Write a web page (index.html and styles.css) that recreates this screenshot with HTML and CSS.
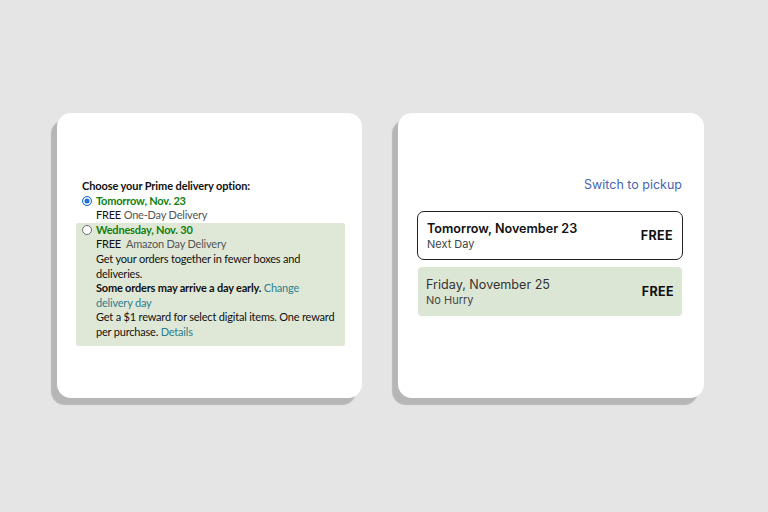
FILE: index.html
```html
<!DOCTYPE html>
<html>
<head>
<meta charset="utf-8">
<link rel="stylesheet" href="styles.css">
</head>
<body>
<main class="stage">
  <section class="card card-amazon">
    <div class="prime">
      <div class="prime-title">Choose your Prime delivery option:</div>
      <div class="opt">
        <span class="radio radio-on"></span>
        <div class="opt-body">
          <div class="date">Tomorrow, Nov. 23</div>
          <div class="line"><span class="free">FREE</span> <span class="muted">One-Day Delivery</span></div>
        </div>
      </div>
      <div class="opt opt-hl">
        <span class="radio"></span>
        <div class="opt-body">
          <div class="date">Wednesday, Nov. 30</div>
          <div class="line"><span class="free">FREE</span>&nbsp; <span class="muted">Amazon Day Delivery</span></div>
          <div class="line">Get your orders together in fewer boxes and<br>deliveries.</div>
          <div class="line"><b>Some orders may arrive a day early.</b> <span class="link">Change</span><br><span class="link">delivery day</span></div>
          <div class="line">Get a $1 reward for select digital items. One reward<br>per purchase. <span class="link">Details</span></div>
        </div>
      </div>
    </div>
  </section>
  <section class="card card-walmart">
    <div class="wm">
      <div class="switch">Switch to pickup</div>
      <div class="slot slot-sel">
        <div class="slot-text">
          <div class="slot-date slot-date-b">Tomorrow, November 23</div>
          <div class="slot-sub">Next Day</div>
        </div>
        <div class="slot-price">FREE</div>
      </div>
      <div class="slot slot-green">
        <div class="slot-text">
          <div class="slot-date">Friday, November 25</div>
          <div class="slot-sub">No Hurry</div>
        </div>
        <div class="slot-price">FREE</div>
      </div>
    </div>
  </section>
</main>
</body>
</html>
```
FILE: styles.css
```css
html, body {
  margin: 0;
  padding: 0;
  background: #e5e5e5;
  width: 768px;
  height: 512px;
  overflow: hidden;
}
.stage {
  display: flex;
  gap: 36px;
  padding: 113px 0 0 57px;
}
.card {
  width: 305px;
  height: 285px;
  background: #fff;
  border-radius: 14px;
  box-shadow: -6px 7px 1px #b6b6b6;
  box-sizing: border-box;
}
.card-walmart { width: 306px; }

/* Amazon */
.card-amazon {
  padding: 66px 17px 0 19px;
  font-family: Lato, "Open Sans", sans-serif;
  font-size: 11px;
  line-height: 14.6px;
  letter-spacing: -0.2px;
  color: #111;
}
.prime-title {
  font-weight: 700;
  padding-left: 6px;
  letter-spacing: -0.1px;
}
.opt {
  display: flex;
  align-items: flex-start;
  gap: 4px;
  padding-left: 6px;
}
.opt-hl {
  background: #dfe8d7;
  border-radius: 2px;
  padding-bottom: 6px;
}
.line { white-space: nowrap; }
.radio {
  flex: none;
  width: 8px;
  height: 8px;
  margin-top: 2px;
  border-radius: 50%;
  border: 1px solid #6f6f6f;
  background: #fff;
  box-sizing: content-box;
}
.radio-on {
  border-color: #1c6fe3;
  box-shadow: inset 0 0 0 1.5px #fff;
  background: #1c6fe3;
}
.opt-body { flex: 1; }
.date {
  color: #11800f;
  font-weight: 700;
}
.free { color: #111; }
.muted { color: #555; }
.link { color: #2b7f8c; }

/* Walmart */
.card-walmart {
  padding: 64px 21px 0 19px;
  font-family: Inter, "Noto Sans", sans-serif;
  color: #222;
}
.switch {
  text-align: right;
  color: #4865b0;
  font-size: 12.5px;
  line-height: 16px;
  padding-right: 1px;
}
.slot {
  display: flex;
  align-items: center;
  justify-content: space-between;
  height: 49px;
  box-sizing: border-box;
  padding: 0 9px 0 9px;
  margin-top: 7px;
}
.slot-sel {
  margin-top: 18px;
  border: 1.5px solid #222;
  border-radius: 7px;
}
.slot-green {
  background: #dce6d5;
  border-radius: 4px;
  margin-left: 1px;
  margin-right: 1px;
  padding-left: 8px;
  padding-right: 8px;
}
.slot-date {
  font-size: 12.6px;
  line-height: 16px;
  color: #333;
}
.slot-date-b {
  font-weight: 600;
  color: #111;
}
.slot-sub {
  font-size: 11px;
  line-height: 14px;
  color: #444;
}
.slot-price {
  font-size: 12.5px;
  font-weight: 700;
  letter-spacing: 0.4px;
  color: #111;
}
```
